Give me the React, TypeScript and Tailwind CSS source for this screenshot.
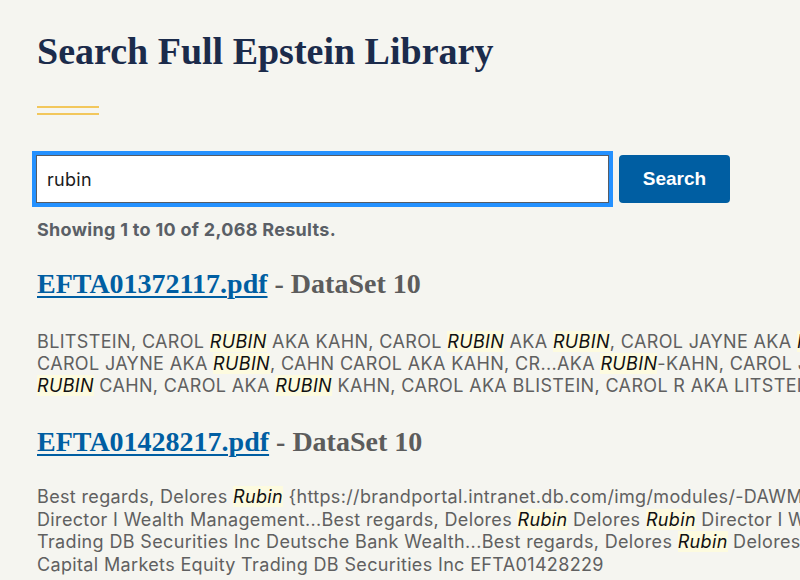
import React from "react";

const serif = { fontFamily: '"Liberation Serif", "Times New Roman", serif' };
const sans = { fontFamily: 'Inter, "Noto Sans", sans-serif' };

function Hl({ children }: { children: React.ReactNode }) {
  return <em className="bg-[#fdfbdf] text-[#111] italic">{children}</em>;
}

function Line({ children }: { children: React.ReactNode }) {
  return <div className="whitespace-nowrap">{children}</div>;
}

export default function App() {
  return (
    <div className="w-[800px] h-[580px] overflow-hidden bg-[#f5f5f0]">
      <div className="pl-[37px] pt-[28px]">
        <h1 style={serif} className="text-[38px] leading-[46px] font-bold text-[#1b2b4b] whitespace-nowrap">
          Search Full Epstein Library
        </h1>
        <div className="mt-[32px] flex flex-col gap-[5px] w-[62px]">
          <div className="h-[2px] bg-[#f2c75c]" />
          <div className="h-[2px] bg-[#f2c75c]" />
        </div>
        <div className="mt-[36px] flex items-center -ml-[5px]">
          <div className="border-[4px] border-[#2491ff] w-[581px]">
            <div style={sans} className="h-[48px] bg-white border border-[#565c65] flex items-center pl-[10px] text-[18px] tracking-[0.3px] text-[#1b1b1b]">
              rubin
            </div>
          </div>
          <button className="ml-[6px] w-[111px] h-[48px] rounded-[4px] bg-[#005ea2] text-white font-bold text-[19px]" style={{ fontFamily: '"Liberation Sans", Arial, sans-serif' }}>
            Search
          </button>
        </div>
        <div style={sans} className="mt-[12px] text-[18px] leading-[22px] tracking-[0.3px] font-bold text-[#5a5f66] whitespace-nowrap">
          Showing 1 to 10 of 2,068 Results.
        </div>

        <div style={serif} className="mt-[25px] text-[28px] leading-[36px] font-bold whitespace-nowrap">
          <a href="#" className="text-[#005ea2] underline decoration-[2px] underline-offset-[3px]">EFTA01372117.pdf</a>
          <span className="text-[#5c5c5c]"> - DataSet 10</span>
        </div>
        <div style={sans} className="mt-[29px] text-[18px] leading-[22px] tracking-[0.35px] text-[#606060]">
          <Line>BLITSTEIN, CAROL <Hl>RUBIN</Hl> AKA KAHN, CAROL <Hl>RUBIN</Hl> AKA <Hl>RUBIN</Hl>, CAROL JAYNE AKA <Hl>RUBIN</Hl> KAHN, CAROL</Line>
          <Line>CAROL JAYNE AKA <Hl>RUBIN</Hl>, CAHN CAROL AKA KAHN, CR...AKA <Hl>RUBIN</Hl>-KAHN, CAROL JAYNE AKA KAHN</Line>
          <Line><Hl>RUBIN</Hl> CAHN, CAROL AKA <Hl>RUBIN</Hl> KAHN, CAROL AKA BLISTEIN, CAROL R AKA LITSTEIN, CAROL</Line>
        </div>

        <div style={serif} className="mt-[27px] text-[28px] leading-[36px] font-bold whitespace-nowrap">
          <a href="#" className="text-[#005ea2] underline decoration-[2px] underline-offset-[3px]">EFTA01428217.pdf</a>
          <span className="text-[#5c5c5c]"> - DataSet 10</span>
        </div>
        <div style={sans} className="mt-[26px] text-[18px] leading-[22.5px] tracking-[0.35px] text-[#606060]">
          <Line>Best regards, Delores <Hl>Rubin</Hl> {"{https://brandportal.intranet.db.com/img/modules/-DAWM-Logo.png}"}</Line>
          <Line>Director I Wealth Management...Best regards, Delores <Hl>Rubin</Hl> Delores <Hl>Rubin</Hl> Director I Wealth</Line>
          <Line>Trading DB Securities Inc Deutsche Bank Wealth...Best regards, Delores <Hl>Rubin</Hl> Delores <Hl>Rubin</Hl></Line>
          <Line>Capital Markets Equity Trading DB Securities Inc EFTA01428229</Line>
        </div>
      </div>
    </div>
  );
}
